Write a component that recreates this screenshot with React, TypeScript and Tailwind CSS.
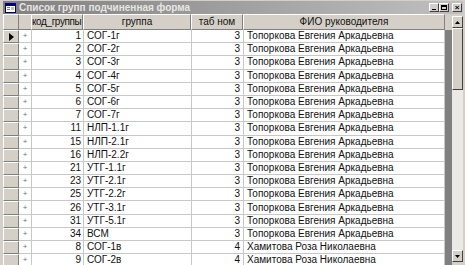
import React from "react";

const rows: [string, string, string, string][] = [
  ["1", "СОГ-1г", "3", "Топоркова Евгения Аркадьевна"],
  ["2", "СОГ-2г", "3", "Топоркова Евгения Аркадьевна"],
  ["3", "СОГ-3г", "3", "Топоркова Евгения Аркадьевна"],
  ["4", "СОГ-4г", "3", "Топоркова Евгения Аркадьевна"],
  ["5", "СОГ-5г", "3", "Топоркова Евгения Аркадьевна"],
  ["6", "СОГ-6г", "3", "Топоркова Евгения Аркадьевна"],
  ["7", "СОГ-7г", "3", "Топоркова Евгения Аркадьевна"],
  ["11", "НЛП-1.1г", "3", "Топоркова Евгения Аркадьевна"],
  ["15", "НЛП-2.1г", "3", "Топоркова Евгения Аркадьевна"],
  ["16", "НЛП-2.2г", "3", "Топоркова Евгения Аркадьевна"],
  ["21", "УТГ-1.1г", "3", "Топоркова Евгения Аркадьевна"],
  ["23", "УТГ-2.1г", "3", "Топоркова Евгения Аркадьевна"],
  ["25", "УТГ-2.2г", "3", "Топоркова Евгения Аркадьевна"],
  ["26", "УТГ-3.1г", "3", "Топоркова Евгения Аркадьевна"],
  ["31", "УТГ-5.1г", "3", "Топоркова Евгения Аркадьевна"],
  ["34", "ВСМ", "3", "Топоркова Евгения Аркадьевна"],
  ["8", "СОГ-1в", "4", "Хамитова Роза Николаевна"],
  ["9", "СОГ-2в", "4", "Хамитова Роза Николаевна"],
];

const cols = "grid grid-cols-[16px_12px_52px_108px_52px_202px]";

function TitleButton({ children, gap }: { children: React.ReactNode; gap?: boolean }) {
  return (
    <div
      className={`w-[10px] h-[9px] bg-[#d4d0c8] border-t border-l border-t-white border-l-white border-b border-r border-b-[#404040] border-r-[#404040] flex items-center justify-center ${gap ? "ml-[3px]" : ""}`}
    >
      {children}
    </div>
  );
}

export default function App() {
  return (
    <div
      className="w-[465px] h-[265px] bg-[#d4d0c8] overflow-hidden flex flex-col pl-[3px] pr-[2px] pt-px"
      style={{ fontFamily: '"Liberation Sans", Arial, sans-serif' }}
    >
      {/* title bar */}
      <div className="h-[13px] shrink-0 bg-gradient-to-r from-[#808080] to-[#c0c0c0] flex items-center pl-[2px] pr-[1px]">
        <svg width="11" height="10" viewBox="0 0 11 10" className="shrink-0">
          <rect x="0.5" y="0.5" width="10" height="9" fill="#ffffff" stroke="#000080" />
          <rect x="1" y="1" width="9" height="2" fill="#000080" />
          <rect x="2" y="4" width="3" height="1" fill="#808080" />
          <rect x="2" y="6" width="3" height="1" fill="#808080" />
          <rect x="6" y="4" width="3" height="3" fill="#c0c0c0" />
        </svg>
        <span className="ml-[3px] text-[10px] font-bold text-[#e8e6e2] leading-none whitespace-nowrap">
          Список групп подчиненная форма
        </span>
        <div className="ml-auto flex items-center">
          <TitleButton>
            <div className="w-[4px] h-[1px] bg-black mt-[4px]" />
          </TitleButton>
          <TitleButton>
            <div className="w-[6px] h-[5px] border border-black border-t-2" />
          </TitleButton>
          <TitleButton gap>
            <span className="text-[8px] leading-none font-bold text-black">×</span>
          </TitleButton>
        </div>
      </div>

      {/* body */}
      <div className="flex flex-1 min-h-0">
        {/* datasheet */}
        <div className="w-[442px] shrink-0 flex flex-col text-[10px] text-[#101010] leading-none">
          {/* header */}
          <div className={`${cols} h-[16px] shrink-0`}>
            <div className="border-t border-l border-white border-r border-r-[#808080] border-b border-b-[#808080] bg-[#d4d0c8]" />
            <div className="border-t border-white border-b border-b-[#808080] bg-[#d4d0c8]" />
            <div className="border-t border-l border-white border-r border-r-[#808080] border-b border-b-[#808080] bg-[#d4d0c8] flex items-center justify-start whitespace-nowrap overflow-hidden tracking-[-0.4px]">
              код_группы
            </div>
            {["группа", "таб ном", "ФИО руководителя"].map((h) => (
              <div
                key={h}
                className="border-t border-l border-white border-r border-r-[#808080] border-b border-b-[#808080] bg-[#d4d0c8] flex items-center justify-center whitespace-nowrap overflow-hidden"
              >
                {h}
              </div>
            ))}
          </div>
          {/* rows */}
          <div className="flex-1 min-h-0 overflow-hidden">
            {rows.map((r, i) => (
              <div key={i} className={`${cols} h-[13.2px]`}>
                <div className="bg-[#d4d0c8] border-t border-l border-t-white border-l-white border-r border-b border-r-[#808080] border-b-[#808080] flex items-center justify-center">
                  {i === 0 && (
                    <svg width="5" height="8" viewBox="0 0 5 8">
                      <polygon points="0,0 5,4 0,8" fill="#000" />
                    </svg>
                  )}
                </div>
                <div className="bg-white border-b border-[#c8c8c8] flex items-center justify-center">
                  <span className="text-[8px] text-[#707070] leading-none">+</span>
                </div>
                <div className="bg-white border-l border-b border-[#c8c8c8] flex items-center justify-end pr-[2px]">
                  {r[0]}
                </div>
                <div className="bg-white border-l border-b border-[#c8c8c8] flex items-center pl-[3px] whitespace-nowrap">
                  {r[1]}
                </div>
                <div className="bg-white border-l border-b border-[#c8c8c8] flex items-center justify-end pr-[3px]">
                  {r[2]}
                </div>
                <div className="bg-white border-l border-r border-b border-[#c8c8c8] flex items-center pl-[3px] whitespace-nowrap">
                  {r[3]}
                </div>
              </div>
            ))}
          </div>
        </div>

        {/* workspace strip */}
        <div className="w-[7px] shrink-0 flex flex-col">
          <div className="h-[16px] bg-[#d4d0c8]" />
          <div className="flex-1 bg-[#808080]" />
        </div>

        {/* scrollbar */}
        <div className="w-[11px] shrink-0 flex flex-col pt-[2px]">
          <div className="h-[12px] shrink-0 bg-[#d4d0c8] border-t border-l border-t-white border-l-white border-b border-r border-b-[#404040] border-r-[#404040] flex items-center justify-center">
            <svg width="5" height="3" viewBox="0 0 5 3">
              <polygon points="2.5,0 5,3 0,3" fill="#000" />
            </svg>
          </div>
          <div className="h-[62px] shrink-0 bg-[#d4d0c8] border-t border-l border-t-white border-l-white border-b border-r border-b-[#404040] border-r-[#404040]" />
          <div className="flex-1 bg-[#ebe9e5]" />
          <div className="h-[12px] shrink-0 mb-[3px] bg-[#d4d0c8] border-t border-l border-t-white border-l-white border-b border-r border-b-[#404040] border-r-[#404040] flex items-center justify-center">
            <svg width="5" height="3" viewBox="0 0 5 3">
              <polygon points="0,0 5,0 2.5,3" fill="#000" />
            </svg>
          </div>
        </div>
      </div>
    </div>
  );
}
